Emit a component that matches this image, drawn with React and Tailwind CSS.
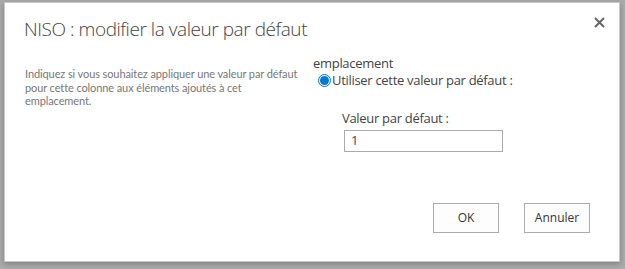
export default function App() {
  return (
    <div className="w-[625px] h-[269px] bg-[#ababab] pt-[2px] pl-[4px] overflow-hidden" style={{ fontFamily: '"Open Sans", "Noto Sans", sans-serif' }}>
      <div className="flex flex-col w-[616px] h-[260px] bg-white border border-[#c8c8c8] shadow-[0_2px_6px_rgba(0,0,0,0.25)]">
        <div className="pl-[19px] pt-[12px] flex items-start justify-between pr-[12px]">
          <h1 className="text-[19px] leading-[28px] font-light tracking-[-0.45px] text-[#444]">NISO : modifier la valeur par défaut</h1>
          <button className="mt-[-1px] w-[16px] h-[16px] flex items-center justify-center">
            <svg width="11" height="11" viewBox="0 0 11 11">
              <path d="M1 1L10 10M10 1L1 10" stroke="#666" strokeWidth="2" />
            </svg>
          </button>
        </div>
        <div className="flex pl-[20px] mt-[12px]">
          <div className="w-[288px] pt-[12px] text-[11px] leading-[13.5px] tracking-[-0.1px] text-[#777] pr-[8px]" style={{ fontFamily: 'Lato, "Open Sans", sans-serif' }}>
            Indiquez si vous souhaitez appliquer une valeur par défaut pour cette colonne aux éléments ajoutés à cet emplacement.
          </div>
          <div className="flex flex-col text-[13px] text-[#444] tracking-[-0.3px]">
            <div className="leading-[16px]">emplacement</div>
            <label className="flex items-center mt-[1px] ml-[5px] leading-[16px]">
              <span className="w-[13px] h-[13px] rounded-full border border-[#0078d7] flex items-center justify-center">
                <span className="w-[9px] h-[9px] rounded-full bg-[#0078d7]" />
              </span>
              <span className="ml-[1px]">Utiliser cette valeur par défaut :</span>
            </label>
            <div className="ml-[29px] mt-[22px] leading-[16px]">Valeur par défaut :</div>
            <div className="ml-[31px] mt-[4px] w-[159px] h-[22px] border border-[#ababab] flex items-center pl-[6px] text-[13px] text-[#444]">1</div>
          </div>
        </div>
        <div className="flex-1" />
        <div className="flex justify-end gap-[25px] pr-[29px] pb-[28px]">
          <button className="w-[66px] h-[30px] border border-[#ababab] bg-[#fdfdfd] text-[12px] text-[#333]">OK</button>
          <button className="w-[66px] h-[30px] border border-[#ababab] bg-[#fdfdfd] text-[12px] text-[#333]">Annuler</button>
        </div>
      </div>
    </div>
  );
}
